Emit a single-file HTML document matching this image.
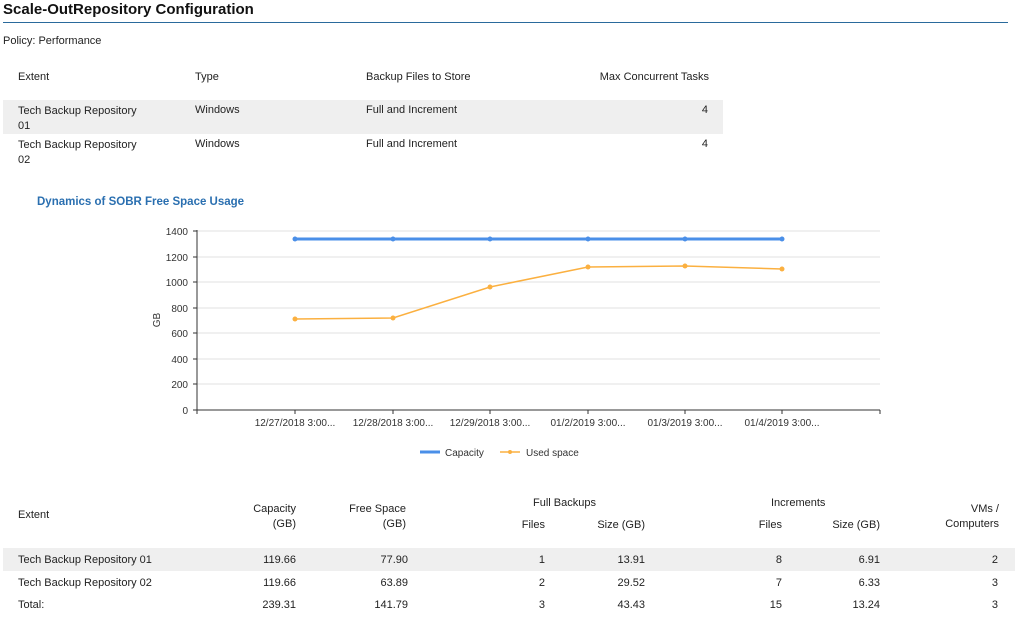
<!DOCTYPE html><html><head><style>
body{margin:0;width:1017px;height:619px;background:#fff;font-family:"Liberation Sans",sans-serif;font-size:11px;color:#222;position:relative;overflow:hidden}
.a{position:absolute;white-space:nowrap}
.r{text-align:right}
</style></head><body>
<div class="a" style="left:3px;top:1px;font-size:15px;font-weight:bold;color:#111">Scale-OutRepository Configuration</div>
<div class="a" style="left:3px;top:22px;width:1005px;height:1px;background:#2a6a9c"></div>
<div class="a" style="left:3px;top:35px">Policy: Performance</div>
<div class="a" style="left:18px;top:71px">Extent</div>
<div class="a" style="left:195px;top:71px">Type</div>
<div class="a" style="left:366px;top:71px">Backup Files to Store</div>
<div class="a r" style="left:560px;width:149px;top:71px">Max Concurrent Tasks</div>
<div class="a" style="left:3px;top:100px;width:720px;height:34px;background:#efefef"></div>
<div class="a" style="left:18px;top:104px;line-height:15px">Tech Backup Repository<br>01</div>
<div class="a" style="left:195px;top:104px">Windows</div>
<div class="a" style="left:366px;top:104px">Full and Increment</div>
<div class="a r" style="left:600px;width:108px;top:104px">4</div>
<div class="a" style="left:18px;top:138px;line-height:15px">Tech Backup Repository<br>02</div>
<div class="a" style="left:195px;top:138px">Windows</div>
<div class="a" style="left:366px;top:138px">Full and Increment</div>
<div class="a r" style="left:600px;width:108px;top:138px">4</div>
<div class="a" style="left:37px;top:196px;color:#2a6fb0;font-weight:bold;font-size:11.5px">Dynamics of SOBR Free Space Usage</div>
<svg class="a" style="left:0;top:0" width="1017" height="470" font-family="Liberation Sans" font-size="10" fill="#333">
<g stroke="#e2e2e2"><line x1="197" x2="880" y1="231" y2="231"/><line x1="197" x2="880" y1="257" y2="257"/><line x1="197" x2="880" y1="282" y2="282"/><line x1="197" x2="880" y1="308" y2="308"/><line x1="197" x2="880" y1="333" y2="333"/><line x1="197" x2="880" y1="359" y2="359"/><line x1="197" x2="880" y1="384" y2="384"/></g>
<g stroke="#333"><line x1="197" x2="197" y1="230" y2="414"/><line x1="197" x2="880" y1="410" y2="410"/>
<line x1="193" x2="197" y1="231" y2="231"/><line x1="193" x2="197" y1="257" y2="257"/><line x1="193" x2="197" y1="282" y2="282"/><line x1="193" x2="197" y1="308" y2="308"/><line x1="193" x2="197" y1="333" y2="333"/><line x1="193" x2="197" y1="359" y2="359"/><line x1="193" x2="197" y1="384" y2="384"/><line x1="193" x2="197" y1="410" y2="410"/>
<line x1="295" x2="295" y1="410" y2="414"/><line x1="393" x2="393" y1="410" y2="414"/><line x1="490" x2="490" y1="410" y2="414"/><line x1="588" x2="588" y1="410" y2="414"/><line x1="685" x2="685" y1="410" y2="414"/><line x1="782" x2="782" y1="410" y2="414"/><line x1="880" x2="880" y1="410" y2="414"/></g>
<g text-anchor="end"><text x="188" y="235">1400</text><text x="188" y="261">1200</text><text x="188" y="286">1000</text><text x="188" y="312">800</text><text x="188" y="337">600</text><text x="188" y="363">400</text><text x="188" y="388">200</text><text x="188" y="414">0</text></g>
<text transform="translate(160,320) rotate(-90)" text-anchor="middle">GB</text>
<g text-anchor="middle"><text x="295" y="426">12/27/2018 3:00...</text><text x="393" y="426">12/28/2018 3:00...</text><text x="490" y="426">12/29/2018 3:00...</text><text x="588" y="426">01/2/2019 3:00...</text><text x="685" y="426">01/3/2019 3:00...</text><text x="782" y="426">01/4/2019 3:00...</text></g>
<polyline fill="none" stroke="#4a8fe8" stroke-width="3" points="295,239 393,239 490,239 588,239 685,239 782,239"/>
<g fill="#4a8fe8"><circle cx="295" cy="239" r="2.5"/><circle cx="393" cy="239" r="2.5"/><circle cx="490" cy="239" r="2.5"/><circle cx="588" cy="239" r="2.5"/><circle cx="685" cy="239" r="2.5"/><circle cx="782" cy="239" r="2.5"/></g>
<polyline fill="none" stroke="#fbb040" stroke-width="1.5" points="295,319 393,318 490,287 588,267 685,266 782,269"/>
<g fill="#fbb040"><circle cx="295" cy="319" r="2.5"/><circle cx="393" cy="318" r="2.5"/><circle cx="490" cy="287" r="2.5"/><circle cx="588" cy="267" r="2.5"/><circle cx="685" cy="266" r="2.5"/><circle cx="782" cy="269" r="2.5"/></g>
<line x1="420" x2="440" y1="452" y2="452" stroke="#4a8fe8" stroke-width="3"/><text x="445" y="456">Capacity</text>
<line x1="500" x2="520" y1="452" y2="452" stroke="#fbb040" stroke-width="1.5"/><circle cx="510" cy="452" r="2" fill="#fbb040"/><text x="526" y="456">Used space</text>
</svg>
<div class="a" style="left:18px;top:509px">Extent</div>
<div class="a r" style="left:200px;width:96px;top:502px;line-height:15px">Capacity<br>(GB)</div>
<div class="a r" style="left:310px;width:96px;top:502px;line-height:15px">Free Space<br>(GB)</div>
<div class="a" style="left:533px;top:497px">Full Backups</div>
<div class="a r" style="left:500px;width:45px;top:519px">Files</div>
<div class="a r" style="left:580px;width:65px;top:519px">Size (GB)</div>
<div class="a" style="left:771px;top:497px">Increments</div>
<div class="a r" style="left:740px;width:42px;top:519px">Files</div>
<div class="a r" style="left:810px;width:70px;top:519px">Size (GB)</div>
<div class="a r" style="left:920px;width:79px;top:502px;line-height:15px">VMs /<br>Computers</div>
<div class="a" style="left:3px;top:548px;width:1012px;height:23px;background:#efefef"></div>
<div class="a" style="left:18px;top:554px">Tech Backup Repository 01</div>
<div class="a r" style="left:200px;width:96px;top:554px">119.66</div><div class="a r" style="left:310px;width:98px;top:554px">77.90</div><div class="a r" style="left:500px;width:45px;top:554px">1</div><div class="a r" style="left:580px;width:65px;top:554px">13.91</div><div class="a r" style="left:740px;width:42px;top:554px">8</div><div class="a r" style="left:810px;width:70px;top:554px">6.91</div><div class="a r" style="left:920px;width:78px;top:554px">2</div>
<div class="a" style="left:18px;top:577px">Tech Backup Repository 02</div>
<div class="a r" style="left:200px;width:96px;top:577px">119.66</div><div class="a r" style="left:310px;width:98px;top:577px">63.89</div><div class="a r" style="left:500px;width:45px;top:577px">2</div><div class="a r" style="left:580px;width:65px;top:577px">29.52</div><div class="a r" style="left:740px;width:42px;top:577px">7</div><div class="a r" style="left:810px;width:70px;top:577px">6.33</div><div class="a r" style="left:920px;width:78px;top:577px">3</div>
<div class="a" style="left:18px;top:599px">Total:</div>
<div class="a r" style="left:200px;width:96px;top:599px">239.31</div><div class="a r" style="left:310px;width:98px;top:599px">141.79</div><div class="a r" style="left:500px;width:45px;top:599px">3</div><div class="a r" style="left:580px;width:65px;top:599px">43.43</div><div class="a r" style="left:740px;width:42px;top:599px">15</div><div class="a r" style="left:810px;width:70px;top:599px">13.24</div><div class="a r" style="left:920px;width:78px;top:599px">3</div>
</body></html>
